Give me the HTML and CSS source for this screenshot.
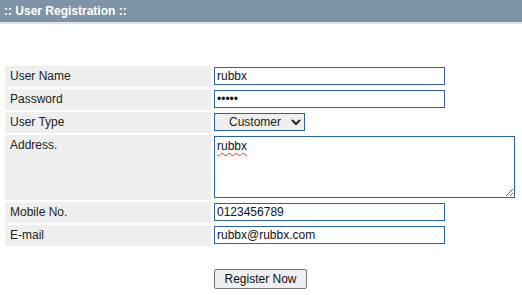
FILE: index.html
```html
<!DOCTYPE html>
<html lang="en">
  <head>
    <meta charset="UTF-8" />
    <meta name="viewport" content="width=device-width, initial-scale=1.0" />
    <title>User Registration</title>
    <link rel="stylesheet" href="styles.css">
  </head>
  <body>
    <div class="panel-title">:: User Registration ::</div>
    <form class="reg-form" action="#" method="post">
      <table class="reg-table">
        <tbody>
          <tr>
            <td class="reg-table__label">User Name</td>
            <td class="reg-table__field">
              <input class="reg-input" type="text" name="username" value="rubbx" />
            </td>
          </tr>
          <tr>
            <td class="reg-table__label">Password</td>
            <td class="reg-table__field">
              <input class="reg-input" type="password" name="password" value="rubbx" />
            </td>
          </tr>
          <tr>
            <td class="reg-table__label">User Type</td>
            <td class="reg-table__field">
              <select class="reg-select" name="usertype">
                <option selected>Customer</option>
                <option>Admin</option>
              </select>
            </td>
          </tr>
          <tr>
            <td class="reg-table__label">Address.</td>
            <td class="reg-table__field">
              <div class="address-box">
                <textarea class="reg-textarea" name="address" spellcheck="false">rubbx</textarea>
                <span class="address-box__spell">rubbx</span>
              </div>
            </td>
          </tr>
          <tr>
            <td class="reg-table__label">Mobile No.</td>
            <td class="reg-table__field">
              <input class="reg-input" type="text" name="mobile" value="0123456789" />
            </td>
          </tr>
          <tr>
            <td class="reg-table__label">E-mail</td>
            <td class="reg-table__field">
              <input class="reg-input" type="text" name="email" value="rubbx@rubbx.com" />
            </td>
          </tr>
        </tbody>
        <tfoot>
          <tr>
            <td class="reg-table__blank"></td>
            <td class="reg-table__submit">
              <button class="reg-button" type="submit">Register Now</button>
            </td>
          </tr>
        </tfoot>
      </table>
    </form>
  </body>
</html>
```

FILE: styles.css
```css
* {
  box-sizing: border-box;
}

body {
  margin: 0;
  background-color: #fff;
  color: #222;
  font-family: "Liberation Sans", Arial, sans-serif;
  font-size: 12px;
}

.panel-title {
  height: 24px;
  padding: 4px 4px 0;
  background-color: #7f93a6;
  border-bottom: 2px solid #dde3e9;
  color: #fff;
  font-weight: bold;
  line-height: 14px;
}

.reg-form {
  margin: 40px 3px 0;
}

.reg-table {
  width: 100%;
  border-spacing: 2px;
}

.reg-table td {
  padding: 0;
  vertical-align: top;
}

.reg-table .reg-table__label {
  width: 206px;
  padding: 3px 5px;
  background-color: #efefef;
  line-height: 14px;
}

.reg-table .reg-table__field {
  padding: 1px 1px 2px;
}

.reg-input {
  display: block;
  width: 231px;
  height: 18px;
  padding: 0 2px;
  border: 1px solid #2d639a;
  color: #111;
  font-family: inherit;
  font-size: 12px;
}

.reg-select {
  display: block;
  width: 91px;
  height: 18px;
  padding: 0 0 0 10px;
  border: 1px solid #2d639a;
  border-radius: 0;
  background-color: #efefef;
  color: #222;
  font-family: inherit;
  font-size: 12px;
}

.address-box {
  position: relative;
  width: 301px;
}

.reg-textarea {
  display: block;
  width: 301px;
  height: 62px;
  padding: 2px;
  border: 1px solid #2d639a;
  color: #111;
  font-family: inherit;
  font-size: 12px;
  line-height: 14px;
}

.address-box__spell {
  position: absolute;
  top: 3px;
  left: 3px;
  color: transparent;
  line-height: 14px;
  text-decoration: underline wavy #f03030;
  text-decoration-thickness: 1px;
  text-underline-offset: 2px;
  pointer-events: none;
}

.reg-table .reg-table__submit {
  padding: 21px 1px 0;
}

.reg-button {
  width: 93px;
  height: 20px;
  padding: 0;
  border: 1px solid #767676;
  border-radius: 2px;
  background-color: #efefef;
  color: #111;
  font-family: inherit;
  font-size: 12px;
}
```
